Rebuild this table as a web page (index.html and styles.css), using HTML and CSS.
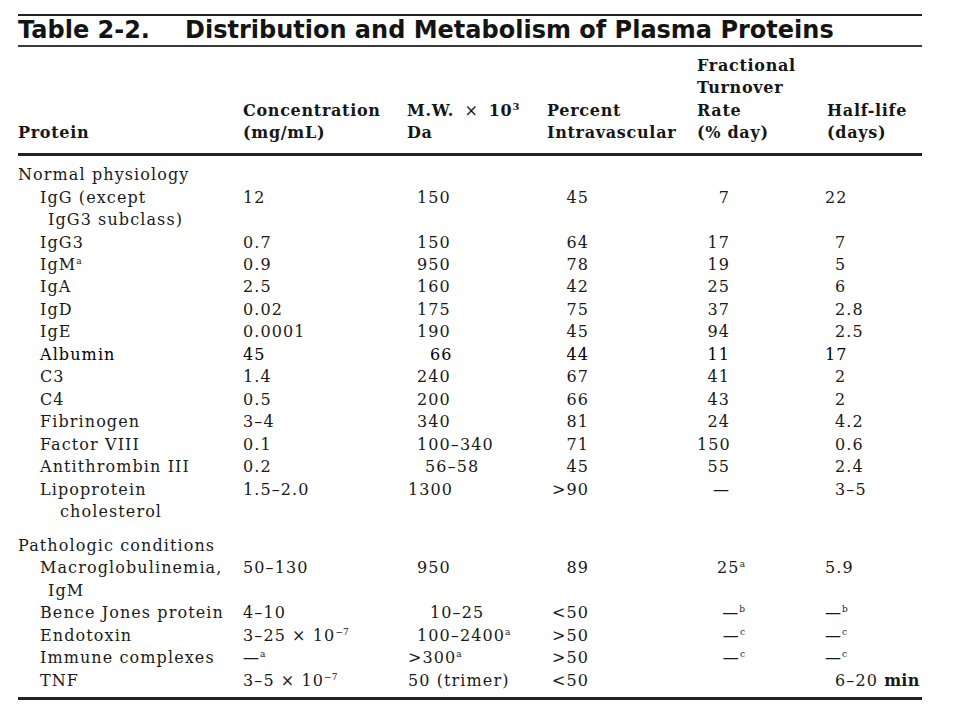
FILE: index.html
```html
<!DOCTYPE html>
<html lang="en">
<head>
<meta charset="utf-8">
<title>Table 2-2. Distribution and Metabolism of Plasma Proteins</title>
<link rel="stylesheet" href="styles.css">
</head>
<body>
<div class="page">
  <h1 class="title"><span class="tnum">Table 2-2.</span><span class="tname">Distribution and Metabolism of Plasma Proteins</span></h1>

  <div class="head">
    <div class="hc c1">Protein</div>
    <div class="hc c2">Concentration<br>(mg/mL)</div>
    <div class="hc c3">M.W. <span class="x">×</span> 10<sup class="hs">3</sup><br>Da</div>
    <div class="hc c4">Percent<br>Intravascular</div>
    <div class="hc c5">Fractional<br>Turnover<br>Rate<br>(% day)</div>
    <div class="hc c6">Half-life<br>(days)</div>
  </div>

  <div class="body">
    <div class="sect">Normal physiology</div>
    <div class="row"><div class="name">IgG (except<span class="cont">IgG3 subclass)</span></div><div class="conc">12</div><div class="mw">150</div><div class="pct">45</div><div class="rate">7</div><div class="half w">22</div></div>
    <div class="row"><div class="name">IgG3</div><div class="conc">0.7</div><div class="mw">150</div><div class="pct">64</div><div class="rate">17</div><div class="half">7</div></div>
    <div class="row"><div class="name">IgM<sup class="fn">a</sup></div><div class="conc">0.9</div><div class="mw">950</div><div class="pct">78</div><div class="rate">19</div><div class="half">5</div></div>
    <div class="row"><div class="name">IgA</div><div class="conc">2.5</div><div class="mw">160</div><div class="pct">42</div><div class="rate">25</div><div class="half">6</div></div>
    <div class="row"><div class="name">IgD</div><div class="conc">0.02</div><div class="mw">175</div><div class="pct">75</div><div class="rate">37</div><div class="half">2.8</div></div>
    <div class="row"><div class="name">IgE</div><div class="conc">0.0001</div><div class="mw">190</div><div class="pct">45</div><div class="rate">94</div><div class="half">2.5</div></div>
    <div class="row dk"><div class="name">Albumin</div><div class="conc">45</div><div class="mw mw2">66</div><div class="pct">44</div><div class="rate">11</div><div class="half w">17</div></div>
    <div class="row"><div class="name">C3</div><div class="conc">1.4</div><div class="mw">240</div><div class="pct">67</div><div class="rate">41</div><div class="half">2</div></div>
    <div class="row"><div class="name">C4</div><div class="conc">0.5</div><div class="mw">200</div><div class="pct">66</div><div class="rate">43</div><div class="half">2</div></div>
    <div class="row"><div class="name">Fibrinogen</div><div class="conc">3–4</div><div class="mw">340</div><div class="pct">81</div><div class="rate">24</div><div class="half">4.2</div></div>
    <div class="row"><div class="name">Factor VIII</div><div class="conc">0.1</div><div class="mw">100–340</div><div class="pct">71</div><div class="rate">150</div><div class="half">0.6</div></div>
    <div class="row"><div class="name">Antithrombin III</div><div class="conc">0.2</div><div class="mw mw1">56–58</div><div class="pct">45</div><div class="rate">55</div><div class="half">2.4</div></div>
    <div class="row"><div class="name">Lipoprotein<span class="cont wide">cholesterol</span></div><div class="conc">1.5–2.0</div><div class="mw mw0">1300</div><div class="pct">&gt;90</div><div class="rate">—</div><div class="half">3–5</div></div>

    <div class="sect gap">Pathologic conditions</div>
    <div class="row"><div class="name">Macroglobulinemia,<span class="cont">IgM</span></div><div class="conc">50–130</div><div class="mw">950</div><div class="pct">89</div><div class="rate rs">25<sup class="fn">a</sup></div><div class="half w">5.9</div></div>
    <div class="row"><div class="name">Bence Jones protein</div><div class="conc">4–10</div><div class="mw mw2">10–25</div><div class="pct">&lt;50</div><div class="rate rs">—<sup class="fn">b</sup></div><div class="half w">—<sup class="fn">b</sup></div></div>
    <div class="row"><div class="name">Endotoxin</div><div class="conc">3–25 × 10<sup class="fn">−7</sup></div><div class="mw">100–2400<sup class="fn">a</sup></div><div class="pct">&gt;50</div><div class="rate rs">—<sup class="fn">c</sup></div><div class="half w">—<sup class="fn">c</sup></div></div>
    <div class="row"><div class="name">Immune complexes</div><div class="conc">—<sup class="fn">a</sup></div><div class="mw mw0">&gt;300<sup class="fn">a</sup></div><div class="pct">&gt;50</div><div class="rate rs">—<sup class="fn">c</sup></div><div class="half w">—<sup class="fn">c</sup></div></div>
    <div class="row"><div class="name">TNF</div><div class="conc">3–5 × 10<sup class="fn">−7</sup></div><div class="mw mw0">50 (trimer)</div><div class="pct">&lt;50</div><div class="rate rs"></div><div class="half">6–20 <span class="min">min</span></div></div>
  </div>
</div>
</body>
</html>
```

FILE: styles.css
```css
html, body {
  margin: 0;
  padding: 0;
  background: #ffffff;
}

.page {
  width: 904px;
  padding: 14px 38px 0 18px;
  color: #1a1a1a;
  font-family: "DejaVu Serif", "Liberation Serif", serif;
  font-size: 16px;
  letter-spacing: 1.1px;
}

.title {
  margin: 0;
  border-top: 2px solid #222;
  border-bottom: 2px solid #3a3a3a;
  font-family: "DejaVu Sans", "Liberation Sans", sans-serif;
  font-weight: bold;
  font-size: 24px;
  line-height: 29px;
  letter-spacing: 0;
  color: #141414;
  display: flex;
}

.tnum {
  width: 167px;
}

.head {
  display: grid;
  grid-template-columns: 225px 164px 140px 150px 128px 97px;
  align-items: end;
  padding: 8px 0 9px;
  border-bottom: 3px solid #222;
  font-weight: bold;
  line-height: 22.3px;
  letter-spacing: 0.7px;
  color: #161616;
}

.hc.c6 {
  padding-left: 2px;
}

.x {
  font-weight: normal;
  margin: 0 4px;
}

.hs {
  font-size: 10px;
  line-height: 0;
  vertical-align: 6px;
}

.body {
  padding: 8px 0 5px;
  border-bottom: 3px solid #222;
  line-height: 22.45px;
}

.sect.gap {
  margin-top: 11.5px;
}

.row {
  display: grid;
  grid-template-columns: 225px 164px 140px 150px 128px 97px;
}

.name {
  padding-left: 22px;
}

.cont {
  display: block;
  padding-left: 8px;
}

.cont.wide {
  padding-left: 20px;
}

.mw {
  padding-left: 10px;
}

.mw0 {
  padding-left: 1px;
}

.mw1 {
  padding-left: 18px;
}

.mw2 {
  padding-left: 23px;
}

.pct {
  text-align: right;
  padding-right: 108px;
}

.rate {
  text-align: right;
  padding-right: 95px;
}

.rate.rs {
  padding-right: 80px;
}

.half {
  padding-left: 10px;
  white-space: nowrap;
}

.half.w {
  padding-left: 0;
}

.min {
  font-weight: bold;
  letter-spacing: 0.3px;
}

.fn {
  font-size: 9px;
  line-height: 0;
  vertical-align: 6px;
  letter-spacing: 0;
}

.dk {
  color: #000;
}
```
